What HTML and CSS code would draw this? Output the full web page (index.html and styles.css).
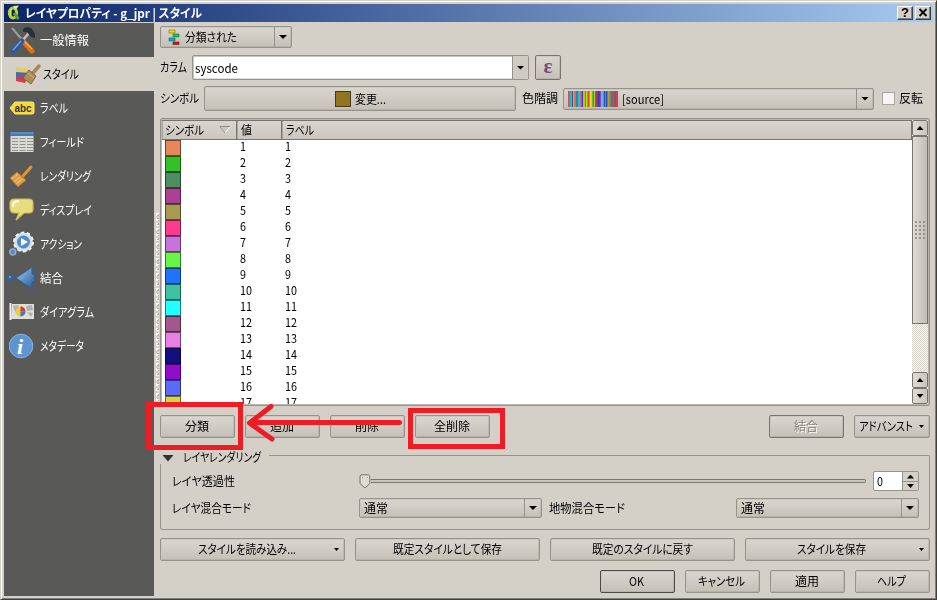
FILE: index.html
```html
<!DOCTYPE html>
<html lang="ja">
<head>
<meta charset="utf-8">
<title>レイヤプロパティ</title>
<link rel="stylesheet" href="styles.css">
</head>
<body>
<div class="window">
  <header class="titlebar">
    <svg class="logo" width="14" height="16" viewBox="0 0 14 16"><ellipse cx="6" cy="8" rx="3.600" ry="5" fill="none" stroke="#b8d432" stroke-width="3"/><path d="M7 8l4.500 6" stroke="#5f9c2c" stroke-width="3"/><path d="M6 1l6-.5-3 4" fill="#e6ee80"/><path d="M4 4v7" stroke="#e9f0a5" stroke-width="1"/></svg>
    <span class="t" data-w="177">レイヤプロパティ - g_jpr | スタイル</span>
    <div class="winbtns">
      <div class="winbtn">?</div>
      <div class="winbtn"><svg width="10" height="9" viewBox="0 0 10 9"><path d="M1.500 1l7 7M8.500 1l-7 7" stroke="#000" stroke-width="1.800"/></svg></div>
    </div>
  </header>
  <div class="body">
    <nav class="side">
      <div class="item"><svg width="28" height="28" viewBox="0 0 28 28"><path d="M3 2l13 15" stroke="#9aa09f" stroke-width="2"/><path d="M13 14l10 11" stroke="#e86d12" stroke-width="5" stroke-linecap="round"/><path d="M14 14l9 9" stroke="#ffac58" stroke-width="1.500"/><path d="M20 7L13 15" stroke="#bcc3c5" stroke-width="2.500"/><path d="M13 15L4 25" stroke="#245ca8" stroke-width="5" stroke-linecap="round"/><path d="M12 15l-8 9" stroke="#79a6dd" stroke-width="1.300"/><path d="M14 3q5-4 9 0l3 5 0 4-4-1-4-5-4 0z" fill="#293137"/></svg><span class="t" data-w="49">一般情報</span></div>
      <div class="item on"><svg width="32" height="28" viewBox="0 0 32 28"><path d="M7 7l13 2-2 5-11-2z" fill="#dfcf65"/><path d="M7 12l13 1-3 4-10 0z" fill="#4867b4"/><path d="M7 17l12-1-3 7-9-2z" fill="#d83b43"/><path d="M30 6l-7 8" stroke="#a78959" stroke-width="3.500" stroke-linecap="round"/><path d="M20 10l7 6-5 8-8-6z" fill="#af8d5a" stroke="#806640"/><path d="M19 13l6 5" stroke="#d2b582"/></svg><span class="t" data-w="36">スタイル</span></div>
      <div class="item"><svg width="28" height="28" viewBox="0 0 28 28"><path d="M1 14l5-6h17q2 0 2 2v8q0 2-2 2H6z" fill="#f8d93a" stroke="#fae77b"/><text x="5.500" y="17.800" class="abc" textLength="17" lengthAdjust="spacingAndGlyphs">abc</text></svg><span class="t" data-w="28">ラベル</span></div>
      <div class="item"><svg width="28" height="28" viewBox="0 0 28 28"><path d="M1.500 4h23v20h-23z" fill="#d9dad5"/><path d="M1 4h24v4H1z" fill="#4579b6"/><path d="M2 5h22" stroke="#75a0d0"/><path d="M3 10.500h21M3 13.500h21M3 16.500h21M3 19.500h21M3 22.500h21" stroke="#92958f" stroke-dasharray="6 1.500"/></svg><span class="t" data-w="44">フィールド</span></div>
      <div class="item"><svg width="28" height="28" viewBox="0 0 28 28"><path d="M22 5l-8 9" stroke="#e1952e" stroke-width="3" stroke-linecap="round"/><path d="M8 10l9 8-8 7-8-9z" fill="#dda044" stroke="#b57525"/><path d="M3 17l6-5M5 20l6-5M7 22l6-5" stroke="#f1c57d"/></svg><span class="t" data-w="51">レンダリング</span></div>
      <div class="item"><svg width="28" height="28" viewBox="0 0 28 28"><path d="M6 3h14q4 0 4 4v6q0 4-4 4h-5l-8 7 3-7H6q-5 0-5-5V7q0-4 5-4z" fill="#e9dc7f" stroke="#cdbd50" stroke-width="1.200"/><path d="M4 11q-1-6 6-6" fill="none" stroke="#fffad5" stroke-width="2.500"/></svg><span class="t" data-w="52">ディスプレイ</span></div>
      <div class="item"><svg width="28" height="28" viewBox="0 0 28 28"><circle cx="14.500" cy="12" r="8" fill="#508bcc" stroke="#d4dfe8" stroke-width="3"/><circle cx="14.500" cy="12" r="9.500" fill="none" stroke="#edf1f3" stroke-width="2" stroke-dasharray="3.500 2.467"/><path d="M12 8l7 4-7 4z" fill="#fff"/><circle cx="3.800" cy="22" r="3" fill="#528bc9" stroke="#8faec7" stroke-width="1.500"/></svg><span class="t" data-w="42">アクション</span></div>
      <div class="item"><svg class="wide" width="30" height="28" viewBox="-2 0 30 28"><defs><linearGradient id="bl" x2="1" y2="1"><stop stop-color="#a7caec"/><stop offset="1" stop-color="#1e5699"/></linearGradient></defs><path d="M7 14L23 3v7l3 1-1 3 1 3-3 1v7z" fill="url(#bl)" stroke="#2b5f9f"/><ellipse cx="1.500" cy="14" rx="3" ry="3.800" fill="#2f629e"/><circle cx="1" cy="13" r="1.200" fill="#6f9ccc"/></svg><span class="t" data-w="23">結合</span></div>
      <div class="item"><svg width="28" height="28" viewBox="0 0 28 28"><path d="M1.500 5v17" stroke="#eee" stroke-width="2"/><path d="M3 6h22v15H2z" fill="#dededb"/><path d="M4 8l5-1 2 4-5 3zM17 8l6-1 1 5-6 1zM18 14l6 1-2 4z" fill="#aeb2ad"/><circle cx="11.500" cy="13.500" r="5" fill="#f1c944"/><path d="M11.500 8.500a5 5 0 0 1 5 5h-5z" fill="#d63a32"/><path d="M11.500 13.500h5a5 5 0 0 1-5 5z" fill="#367cc7"/></svg><span class="t" data-w="54">ダイアグラム</span></div>
      <div class="item"><svg width="28" height="28" viewBox="0 0 28 28"><circle cx="12" cy="14" r="11.800" fill="#5c95d2" stroke="#8fb4de"/><text x="8" y="21.500" class="info">i</text></svg><span class="t" data-w="44">メタデータ</span></div>
    </nav>
    <div class="split"><div class="dots"></div></div>
    <main>
      <div class="row r1">
        <div class="combo c1"><svg width="12" height="16" viewBox="0 0 12 16"><path d="M1 1h6v3H1z" fill="#ffd400" stroke="#887a20" stroke-width=".7"/><path d="M5 5h6v3H5z" fill="#1dbb67" stroke="#287b52" stroke-width=".7"/><path d="M1 9h6v3H1z" fill="#16a8b8" stroke="#1d6f7c" stroke-width=".7"/><path d="M5 13h6v2.500H5z" fill="#cc170f" stroke="#842218" stroke-width=".7"/></svg><span class="t" data-w="52">分類された</span><i class="dd"></i></div>
      </div>
      <div class="row r2">
        <span class="t lab" data-w="27">カラム</span>
        <div class="combo edit"><span class="t" data-w="43">syscode</span><i class="dd"></i></div>
        <div class="btn eps">ε</div>
      </div>
      <div class="row r3">
        <span class="t lab" data-w="39">シンボル</span>
        <div class="btn change"><b class="sw"></b><span class="t" data-w="31">変更...</span></div>
        <span class="t tone" data-w="36">色階調</span>
        <div class="combo ramp"><b class="bars" id="bars"></b><span class="t" data-w="42">[source]</span><i class="dd"></i></div>
        <div class="check"></div>
        <span class="t" data-w="24">反転</span>
      </div>
      <div class="table">
        <div class="tmain">
          <div class="thead">
            <div class="th h1"><span class="t" data-w="39">シンボル</span><svg width="12" height="8" viewBox="0 0 12 8"><path d="M1 .5h10L6 7z" fill="#c9c5be" stroke="#f5f3ef"/><path d="M.5.500h10.500M1 1l5 6" fill="none" stroke="#908d87"/></svg></div>
            <div class="th h2"><span class="t" data-w="11">値</span></div>
            <div class="th h3"><span class="t" data-w="28">ラベル</span></div>
          </div>
          <div class="rows" id="rows"></div>
        </div>
        <div class="scroll">
          <div class="sb"><i class="up"></i></div>
          <div class="thumb"><div class="grip"></div></div>
          <div class="trough"></div>
          <div class="sb"><i class="up"></i></div>
          <div class="sb"><i class="down"></i></div>
        </div>
      </div>
      <div class="row r4">
        <div class="btn w75"><span class="t" data-w="24">分類</span></div>
        <div class="btn w75"><span class="t" data-w="24">追加</span></div>
        <div class="btn w75"><span class="t" data-w="24">削除</span></div>
        <div class="btn w75"><span class="t" data-w="36">全削除</span></div>
        <div class="btn w75 off"><span class="t" data-w="24">結合</span></div>
        <div class="btn w76 adv"><span class="t" data-w="54">アドバンスト</span><i class="sm"></i></div>
      </div>
      <section class="group">
        <div class="ghead"><i class="tri"></i><span class="t" data-w="78">レイヤレンダリング</span><b></b></div>
        <div class="gbody">
          <div class="grow g1">
            <span class="t" data-w="63">レイヤ透過性</span>
            <div class="slider"><svg width="12" height="15" viewBox="0 0 12 15"><path d="M2 .8h7.500l1.300 1.200v7.500L6 14 1 9.500V2z" fill="#dedbd5" stroke="#77756c"/><path d="M3 3.500h1M8 3.500h1" stroke="#999"/></svg><b></b></div>
            <div class="spin"><span class="t" data-w="6">0</span><div><p><i class="up"></i></p><p><i class="down"></i></p></div></div>
          </div>
          <div class="grow g2">
            <span class="t" data-w="79">レイヤ混合モード</span>
            <div class="combo mode"><span class="t" data-w="24">通常</span><i class="dd"></i></div>
            <span class="t feat" data-w="76">地物混合モード</span>
            <div class="combo mode"><span class="t" data-w="24">通常</span><i class="dd"></i></div>
          </div>
        </div>
      </section>
      <div class="row r5">
        <div class="btn menu"><span class="t" data-w="98">スタイルを読み込み...</span><i class="sm"></i></div>
        <div class="btn"><span class="t" data-w="109">既定スタイルとして保存</span></div>
        <div class="btn"><span class="t" data-w="101">既定のスタイルに戻す</span></div>
        <div class="btn menu m2"><span class="t" data-w="69">スタイルを保存</span><i class="sm"></i></div>
      </div>
      <div class="row r6">
        <div class="btn w75 ok"><span class="t" data-w="15">OK</span></div>
        <div class="btn w75"><span class="t" data-w="47">キャンセル</span></div>
        <div class="btn w75"><span class="t" data-w="24">適用</span></div>
        <div class="btn w75"><span class="t" data-w="29">ヘルプ</span></div>
      </div>
    </main>
  </div>
</div>
<svg class="marks" width="937" height="600" viewBox="0 0 937 600"><g fill="none" stroke="#ee1c24" stroke-width="5"><path d="M148.500 404.500h92v43h-92zM410.500 410.500h92v36h-92z"/><path d="M399.500 422.500H251M271 406.500L249.500 423 272 439" stroke-linecap="round" stroke-linejoin="round"/></g></svg>
<script src="app.js"></script>
</body>
</html>
```

FILE: styles.css
```css
* { box-sizing: border-box; }
body { margin: 0; width: 937px; height: 600px; overflow: hidden; font: 12px/16px "Noto Sans CJK JP", sans-serif; font-feature-settings: "palt"; color: #000; background: #d4d0c8; }
.window { width: 937px; height: 600px; padding: 2px; border: 1px solid #d4d0c8; border-right-color: #404040; border-bottom-color: #404040; box-shadow: inset 1px 1px #fff, inset -1px -1px #808080; }
.t { display: inline-block; white-space: nowrap; transform-origin: 0 50%; flex: none; }
.titlebar { margin: 1px 0 1px 1px; width: 929px; height: 18px; background: linear-gradient(90deg, #0a246a, #a6caf0); display: flex; align-items: center; color: #fff; font-weight: 700; padding: 0 2px 0 3px; }
.logo { margin-right: 4px; }
.winbtns { display: flex; gap: 2px; margin-left: auto; }
.winbtn { width: 16px; height: 14px; background: #d4d0c8; border: 1px solid; border-color: #fff #404040 #404040 #fff; box-shadow: inset -1px -1px #808080; color: #000; font: bold 13px/12px "Liberation Sans", sans-serif; text-align: center; }
.winbtn svg { display: block; margin: 1px 0 0 2px; }
.body { display: flex; }
.side { margin-left: 1px; width: 150px; height: 573px; background: #595957; flex: none; }
.item { height: 34px; display: flex; align-items: center; color: #fff; padding-left: 5px; gap: 3px; }
.item svg { flex: none; }
.item .wide { margin-left: -2px; }
.item.on { background: #d4d0c8; color: #000; gap: 2px; }
.abc { font: bold 10px "Liberation Sans", sans-serif; fill: #333; }
.info { font: italic bold 22px "Liberation Serif", serif; fill: #fff; }
.split { width: 6px; flex: none; padding: 190px 1px 0 2px; }
.dots { height: 192px; width: 3px; background: linear-gradient(135deg, #fff 60%, #b0aca4 60%) 0 0 / 3px 3px; -webkit-mask: repeating-linear-gradient(#000 0 3px, transparent 3px 5px); mask: repeating-linear-gradient(#000 0 3px, transparent 3px 5px); }
main { width: 770px; display: flex; flex-direction: column; }
.row { display: flex; align-items: center; flex: none; }
.row > .t { margin-bottom: 1px; }
.btn, .combo { border: 1px solid #96938c; border-radius: 2px; background: linear-gradient(#dad6cf, #d0ccc4 50%, #c4c0b8); box-shadow: inset 0 0 0 1px rgba(150,147,140,.3), inset 1px 1px #e2dfd9; display: flex; align-items: center; flex: none; }
.btn { justify-content: center; height: 23px; }
.btn .t { margin-bottom: 2px; }
.btn.w75 .t { margin-left: -2px; }
.w75 { width: 75px; } .w76 { width: 76px; }
.dd { margin-left: auto; align-self: stretch; width: 17px; border-left: 1px solid #96938c; display: flex; align-items: center; justify-content: center; flex: none; }
.dd::after { content: ""; width: 8px; height: 4px; background: #000; clip-path: polygon(0 0, 100% 0, 50% 100%); }
.r1 { margin-top: 3px; height: 22px; }
.c1 { width: 132px; height: 22px; padding-left: 7px; }
.c1 svg { margin-right: 5px; }
.r2 { margin-top: 7px; height: 25px; }
.edit { width: 337px; height: 25px; margin-left: 5px; background: #fff; padding-left: 2px; }
.edit .dd { background: #cfcbc3; width: 16px; }
.eps { width: 26px; height: 25px; margin-left: 6px; border-color: #77756c; color: #724a7c; font: bold 21px/20px "Liberation Serif", serif; padding-bottom: 4px; }
.r3 { margin-top: 6px; height: 25px; }
.change { width: 312px; height: 25px; margin-left: 5px; }
.change .t { margin-bottom: 0; }
.sw { width: 16px; height: 16px; background: #8f7423; border: 1px solid #4a3c12; margin-right: 4px; }
.tone { margin-left: 6px; }
.ramp { width: 311px; height: 22px; margin-left: 5px; padding-left: 4px; }
.bars { width: 50px; height: 16px; display: flex; margin-right: 4px; }
.bars u { flex: 1; }
.check { width: 13px; height: 13px; margin: 0 4px 0 8px; background: #f5f5f5; border: 1px solid #aaa69e; flex: none; }
.table { margin-top: 7px; height: 288px; border: 1px solid #96938c; border-radius: 2px; box-shadow: inset 0 0 0 1px #bbb7af; padding: 1px; display: flex; background: #fff; flex: none; }
.tmain { flex: 1; overflow: hidden; }
.thead { display: flex; height: 20px; border-bottom: 1px solid #77756c; background: linear-gradient(#dad6cf, #cbc7bf); border-top: 1px solid #77756c; }
.th { display: flex; align-items: center; border-right: 1px solid #77756c; box-shadow: inset 1px 0 #aaa69e; padding-left: 3px; }
.th .t { margin-bottom: 1px; }
.h1 { width: 75px; gap: 15px; } .h2 { width: 45px; padding-left: 4px; } .h3 { flex: 1; padding-left: 4px; }
.rows { height: 265px; overflow: hidden; }
.tr { display: flex; height: 16px; line-height: 12px; }
.chip { width: 16px; height: 16px; margin: 0 59px 0 3px; border: 1px solid rgba(0,0,0,.5); }
.tr .v { width: 45px; }
.scroll { width: 16px; display: flex; flex-direction: column; }
.sb { height: 16px; border: 1px solid #77756c; border-radius: 2px; background: linear-gradient(90deg, #e0dcd6, #cac6be); display: flex; align-items: center; justify-content: center; flex: none; }
.up, .down { width: 7px; height: 4px; background: #000; clip-path: polygon(50% 0, 100% 100%, 0 100%); }
.down { clip-path: polygon(0 0, 100% 0, 50% 100%); }
.thumb { height: 188px; border: 1px solid #77756c; background: linear-gradient(90deg, #e0dcd6, #c2beb6); display: flex; align-items: center; justify-content: center; }
.grip { width: 11px; height: 19px; background: radial-gradient(circle at 1px 1px, #96938c 1px, transparent 1.300px) 0 0 / 4px 4px; }
.trough { flex: 1; background: repeating-conic-gradient(#fff 0 25%, #d4d0c8 0 50%) 0 0 / 2px 2px; }
.r4 { margin-top: 9px; gap: 10px; }
.off { margin-left: 269px; border-color: #77756c; color: #85827a; text-shadow: 1px 1px #fff; }
.sm { width: 5px; height: 3px; background: #000; clip-path: polygon(0 0, 100% 0, 50% 100%); flex: none; }
.adv { gap: 6px; padding-right: 1px; }
.group { margin-top: 12px; height: 80px; flex: none; }
.ghead { height: 14px; display: flex; align-items: center; padding-left: 2px; }
.ghead b { flex: 1; align-self: flex-start; margin: 5px 0 0 8px; height: 9px; border: solid #96938c; border-width: 1px 1px 0 0; border-radius: 0 2px 0 0; }
.tri { width: 12px; height: 7px; background: #333; clip-path: polygon(0 0, 100% 0, 50% 100%); margin: 2px 9px 0 0; }
.gbody { height: 66px; border: 1px solid #96938c; border-top: 0; border-radius: 0 0 3px 3px; padding: 7px 10px 0 11px; }
.grow { display: flex; align-items: center; height: 20px; }
.grow .t { margin-bottom: 1px; }
.g2 { margin-top: 7px; }
.slider { display: flex; align-items: center; margin-left: 124px; width: 507px; flex: none; }
.slider b { flex: 1; height: 4px; border: 1px solid #77756c; border-left: 0; border-radius: 0 2px 2px 0; background: #c8c4bc; }
.spin { width: 46px; height: 20px; margin-left: 7px; border: 1px solid #96938c; border-radius: 2px; background: #fff; padding-left: 3px; display: flex; align-items: center; flex: none; }
.spin div { width: 16px; height: 18px; margin-left: auto; border-left: 1px solid #96938c; background: #d4d0c8; }
.spin p { margin: 0; height: 9px; display: flex; align-items: center; justify-content: center; }
.spin p + p { border-top: 1px solid #96938c; }
.mode { width: 183px; height: 20px; padding-left: 4px; }
.g2 > .mode { margin-left: 108px; }
.g2 .feat { margin-left: 7px; }
.g2 .feat + .mode { margin-left: 111px; }
.r5 { margin-top: 8px; gap: 10px; }
.r5 .btn { width: 185px; }
.r5 .menu { justify-content: flex-start; padding-left: 37px; }
.r5 .m2 { padding-left: 51px; }
.r5 .sm { margin: 0 5px 0 auto; }
.r6 { margin-top: 9px; gap: 10px; padding-left: 440px; }
.ok { border-color: #4b4a46; }
.marks { position: absolute; left: 0; top: 0; pointer-events: none; }
```

FILE: app.js
```js
const chips = ["#e8875a", "#34c126", "#4d8f5e", "#ab4094", "#a59c50", "#fb3c8d", "#c872dd", "#66f64a", "#1f74ff", "#3bc3a3", "#22ffff", "#a2588f", "#e880e4", "#10107f", "#930cce", "#586bfa", "#d5d73e"];
document.getElementById("rows").innerHTML = chips.map((c, i) =>
  `<div class="tr"><div class="chip" style="background:${c}"></div><div class="v"><span class="t" data-w="${i < 9 ? 6 : 12}">${i + 1}</span></div><div><span class="t" data-w="${i < 9 ? 6 : 12}">${i + 1}</span></div></div>`).join("");

const ramp = "d05050 22a8c8 18b8c0 d08830 4848b0 c8c020 d08020 38c058 3080c0 c04860 20c8b0 40d040 d86090 c84880 4040c0 78e020 b8c820 40a060 b0e020 70c040 d04838 e08830 f0e030 e0c060 60c040 30a050 c0c030 b85030 a04060 c03030 3838a0 3050d0 9040c0 50c0f0 60b0d0 c070a0 2050c0 30a0b0 2050b0 e05050 d89030 d07820 40a070 3080a0 a05090 d04070 906040 b04060 d04060 208890".split(" ");
document.getElementById("bars").innerHTML = ramp.map(c => `<u style="background:#${c}"></u>`).join("");

/* Condense each label to the width reserved for it. */
document.querySelectorAll(".t").forEach(el => {
  const w = +el.dataset.w, n = el.getBoundingClientRect().width;
  el.style.transform = `scaleX(${w / n})`;
  el.style.marginRight = `${w - n}px`;
});
```
